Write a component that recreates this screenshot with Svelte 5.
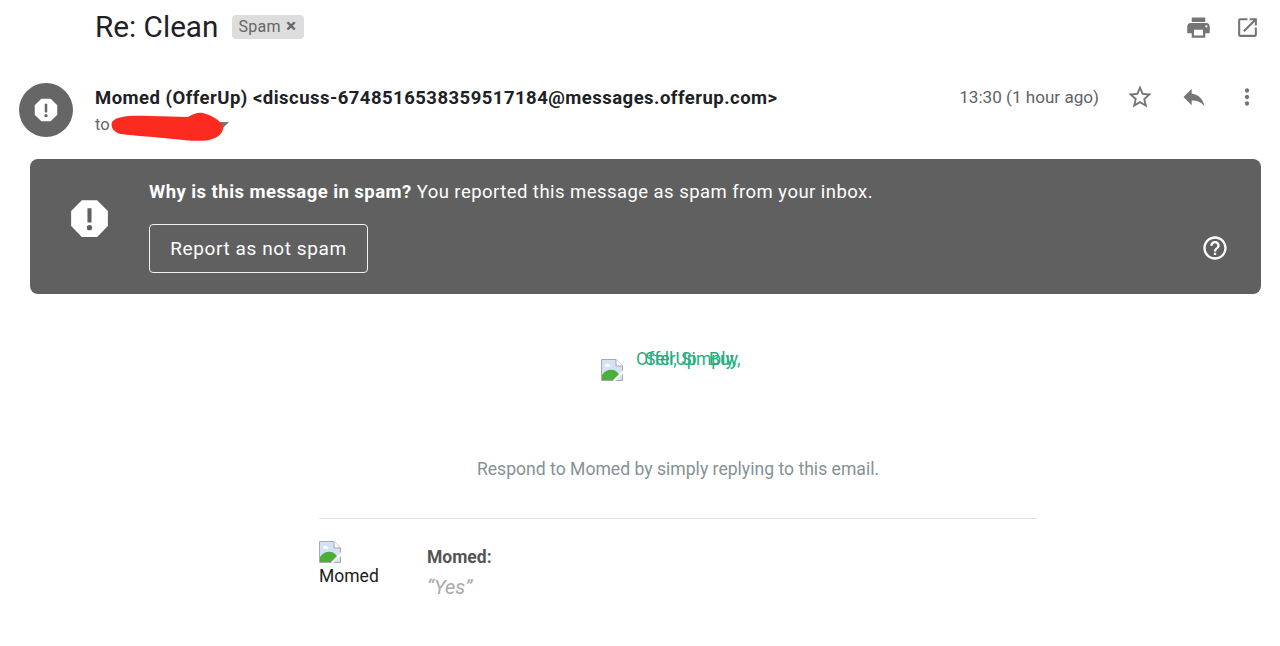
<script>
  const altTexts = [
    { text: 'OfferUp', cls: 'a1' },
    { text: 'Sell, Simply,', cls: 'a2' },
    { text: 'Buy,', cls: 'a3' }
  ];
</script>

{#snippet broken()}
  <svg class="broken" viewBox="0 0 22 22" width="22" height="22">
    <path d="M0.5 0.5H15L21.5 7V21.5H0.5Z" fill="#d3e2f7" stroke="#a9a9a9" stroke-width="1"/>
    <path d="M15 0.5V7H21.5" fill="#fff" stroke="#a9a9a9" stroke-width="1"/>
    <path d="M4 6.5c0-2 3-2.5 4-1 2 0 2 2 .5 2.2H5c-1 0-1-.6-1-1.2z" fill="#fff"/>
    <path d="M1 21V16C4 11 10 9.5 14 11.5c2 1 3.500 3 5 5.500L15 21Z" fill="#4caf3a"/>
    <path d="M23 12L13 22" stroke="#fff" stroke-width="2.500"/>
  </svg>
{/snippet}

<div class="page">
  <header class="subject">
    <h1>Re: Clean</h1>
    <span class="chip">Spam <span class="x">×</span></span>
    <div class="top-icons">
      <svg viewBox="0 0 24 24" width="27" height="27" fill="#757575"><path d="M19 8H5c-1.66 0-3 1.34-3 3v6h4v4h12v-4h4v-6c0-1.66-1.34-3-3-3zm-3 11H8v-5h8v5zm3-7c-.55 0-1-.45-1-1s.45-1 1-1 1 .45 1 1-.45 1-1 1zm-1-9H6v4h12V3z"/></svg>
      <svg viewBox="0 0 24 24" width="25" height="25" fill="#757575"><path d="M19 19H5V5h7V3H5c-1.11 0-2 .9-2 2v14c0 1.1.89 2 2 2h14c1.1 0 2-.9 2-2v-7h-2v7zM14 3v2h3.59l-9.83 9.83 1.41 1.41L19 6.41V10h2V3h-7z"/></svg>
    </div>
  </header>

  <section class="sender">
    <div class="avatar">
      <svg viewBox="0 0 24 24" width="30" height="30"><path fill="#fff" d="M15.73 3H8.27L3 8.27v7.46L8.27 21h7.46L21 15.73V8.27L15.73 3z"/><path fill="#666" d="M11 7h2v7h-2zM12 15.2a1.3 1.3 0 1 1 0 2.6 1.3 1.3 0 0 1 0-2.6z"/></svg>
    </div>
    <div class="who">
      <div class="from">Momed (OfferUp) &lt;discuss-6748516538359517184@messages.offerup.com&gt;</div>
      <div class="to">to
        <span class="caret"></span>
        <svg class="scribble" viewBox="0 0 114 30" width="114" height="30"><path fill="#fb2b1f" d="M2 10C6 4 20 3 40 4c14 0 26 1 38 1 5-3 10-5 15-4 8 2 17 7 20 13 1 6-4 12-14 14-12 2-24 0-36-1-16-2-38-3-52-5C5 21 0 16 2 10z"/></svg>
      </div>
    </div>
    <div class="meta">
      <span class="time">13:30 (1 hour ago)</span>
      <svg viewBox="0 0 24 24" width="28" height="28" fill="#757575"><path d="M22 9.24l-7.19-.62L12 2 9.19 8.63 2 9.24l5.46 4.73L5.82 21 12 17.27 18.18 21l-1.63-7.03L22 9.24zM12 15.4l-3.76 2.27 1-4.28-3.32-2.88 4.38-.38L12 6.1l1.71 4.04 4.38.38-3.32 2.88 1 4.28L12 15.4z"/></svg>
      <svg viewBox="0 0 24 24" width="28" height="28" fill="#757575"><path d="M10 9V5l-7 7 7 7v-4.1c5 0 8.5 1.6 11 5.1-1-5-4-10-11-11z"/></svg>
      <svg viewBox="0 0 24 24" width="26" height="26" fill="#757575"><path d="M12 8c1.1 0 2-.9 2-2s-.9-2-2-2-2 .9-2 2 .9 2 2 2zm0 2c-1.1 0-2 .9-2 2s.9 2 2 2 2-.9 2-2-.9-2-2-2zm0 6c-1.1 0-2 .9-2 2s.9 2 2 2 2-.9 2-2-.9-2-2-2z"/></svg>
    </div>
  </section>

  <section class="banner">
    <svg class="warn" viewBox="0 0 24 24" width="49" height="49"><path fill="#fff" d="M15.73 3H8.27L3 8.27v7.46L8.27 21h7.46L21 15.73V8.27L15.73 3z"/><path fill="#606060" d="M11 7h2v7h-2zM12 15.2a1.3 1.3 0 1 1 0 2.6 1.3 1.3 0 0 1 0-2.6z"/></svg>
    <div class="banner-body">
      <p><strong>Why is this message in spam?</strong> You reported this message as spam from your inbox.</p>
      <button>Report as not spam</button>
    </div>
    <svg class="help" viewBox="0 0 24 24" width="28" height="28" fill="#fff"><path d="M11 18h2v-2h-2v2zm1-16C6.48 2 2 6.48 2 12s4.48 10 10 10 10-4.48 10-10S17.52 2 12 2zm0 18c-4.41 0-8-3.59-8-8s3.59-8 8-8 8 3.59 8 8-3.59 8-8 8zm0-14c-2.21 0-4 1.79-4 4h2c0-1.1.9-2 2-2s2 .9 2 2c0 2-3 1.75-3 5h2c0-2.25 3-2.5 3-5 0-2.21-1.79-4-4-4z"/></svg>
  </section>

  <section class="mail">
    <div class="logo">
      {@render broken()}
      <div class="alts">
        {#each altTexts as alt}
          <span class={alt.cls}>{alt.text}</span>
        {/each}
      </div>
    </div>
    <p class="respond">Respond to Momed by simply replying to this email.</p>
    <div class="quote">
      <div class="pic">
        {@render broken()}
        <div class="pic-alt">Momed</div>
      </div>
      <div class="said">
        <div class="name">Momed:</div>
        <div class="yes">“Yes”</div>
      </div>
    </div>
  </section>
</div>

<style>
  :global(body) {
    margin: 0;
    background: #fff;
    font-family: Roboto, "Liberation Sans", sans-serif;
  }
  .page {
    width: 1280px;
    height: 646px;
    overflow: hidden;
    display: flex;
    flex-direction: column;
  }
  .subject {
    height: 54px;
    display: flex;
    align-items: center;
    padding: 0 20px 0 95px;
  }
  h1 {
    margin: -2px 0 0;
    font-size: 29.7px;
    font-weight: 400;
    color: #202124;
  }
  .chip {
    margin-left: 14px;
    padding: 0 7px 0 6px;
    height: 24px;
    line-height: 24px;
    font-size: 16px;
    letter-spacing: 0.3px;
    color: #666;
    background: #dddddd;
    border-radius: 4px;
  }
  .x {
    font-weight: 700;
    font-size: 19px;
    line-height: 20px;
    margin-left: 1px;
  }
  .top-icons {
    margin-left: auto;
    display: flex;
    align-items: center;
    gap: 23px;
  }
  .sender {
    height: 59px;
    margin-top: 29px;
    display: flex;
    align-items: flex-start;
    padding: 0 20px 0 19px;
    box-sizing: border-box;
  }
  .avatar {
    width: 54px;
    height: 54px;
    border-radius: 50%;
    background: #666;
    display: flex;
    align-items: center;
    justify-content: center;
    flex: none;
  }
  .who {
    margin-left: 22px;
    padding-top: 5px;
  }
  .from {
    font-size: 18.5px;
    letter-spacing: 0.47px;
    font-weight: 700;
    color: #202124;
    line-height: 21px;
  }
  .to {
    position: relative;
    font-size: 16.5px;
    color: #666;
    line-height: 22px;
    margin-top: 5px;
    height: 22px;
  }
  .caret {
    position: absolute;
    left: 122px;
    top: 8px;
    border: 6px solid transparent;
    border-top: 6px solid #777;
    border-bottom: 0;
  }
  .scribble {
    position: absolute;
    left: 15px;
    top: -2px;
  }
  .meta {
    margin-left: auto;
    display: flex;
    align-items: center;
    height: 28px;
  }
  .time {
    font-size: 17.1px;
    color: #5f6368;
    margin-right: 27px;
  }
  .meta svg + svg {
    margin-left: 26px;
  }
  .banner {
    position: relative;
    margin: 17px 19px 0 30px;
    height: 135px;
    box-sizing: border-box;
    background: #606060;
    border-radius: 8px;
    display: flex;
    color: #fff;
  }
  .warn {
    margin: 35px 0 0 35px;
    flex: none;
  }
  .banner-body {
    margin-left: 35px;
    padding-top: 23px;
  }
  .banner-body p {
    margin: 0;
    font-size: 18.5px;
    line-height: 21px;
    letter-spacing: 0.45px;
  }
  .banner-body strong {
    font-weight: 700;
  }
  button {
    display: block;
    margin-top: 21px;
    width: 219px;
    height: 49px;
    box-sizing: border-box;
    background: transparent;
    border: 1.5px solid #f1f1f1;
    border-radius: 4px;
    color: #fff;
    font: 400 19px Roboto, sans-serif;
    letter-spacing: 0.6px;
  }
  .help {
    position: absolute;
    right: 32px;
    top: 75px;
  }
  .mail {
    position: relative;
    display: flex;
    flex-direction: column;
    align-items: center;
  }
  .logo {
    position: relative;
    width: 143px;
    height: 30px;
    margin-top: 63px;
    margin-left: 65px;
  }
  .logo .broken {
    position: absolute;
    left: 0;
    top: 2px;
  }
  .alts span {
    position: absolute;
    top: -10px;
    font-size: 17.6px;
    line-height: 24px;
    color: #1fb080;
    white-space: nowrap;
  }
  .a1 { left: 35px; }
  .a2 { left: 44px; }
  .a3 { left: 108px; }
  .respond {
    margin: 70px 0 0;
    font-size: 17.6px;
    line-height: 24px;
    color: #849294;
    margin-left: 76px;
  }
  .quote {
    margin-top: 37px;
    margin-left: 76px;
    width: 718px;
    border-top: 1px solid #dcdcdc;
    display: flex;
    padding-top: 22px;
  }
  .pic {
    width: 108px;
    font-size: 17.5px;
    line-height: 21px;
    color: #202124;
  }
  .pic-alt {
    margin-top: 3px;
  }
  .pic .broken {
    display: block;
  }
  .said {
    padding-top: 6px;
  }
  .name {
    font-size: 17.5px;
    font-weight: 700;
    color: #555;
    line-height: 21px;
  }
  .yes {
    font-size: 20px;
    font-style: italic;
    color: #aaa;
    margin-top: 7px;
  }
</style>
